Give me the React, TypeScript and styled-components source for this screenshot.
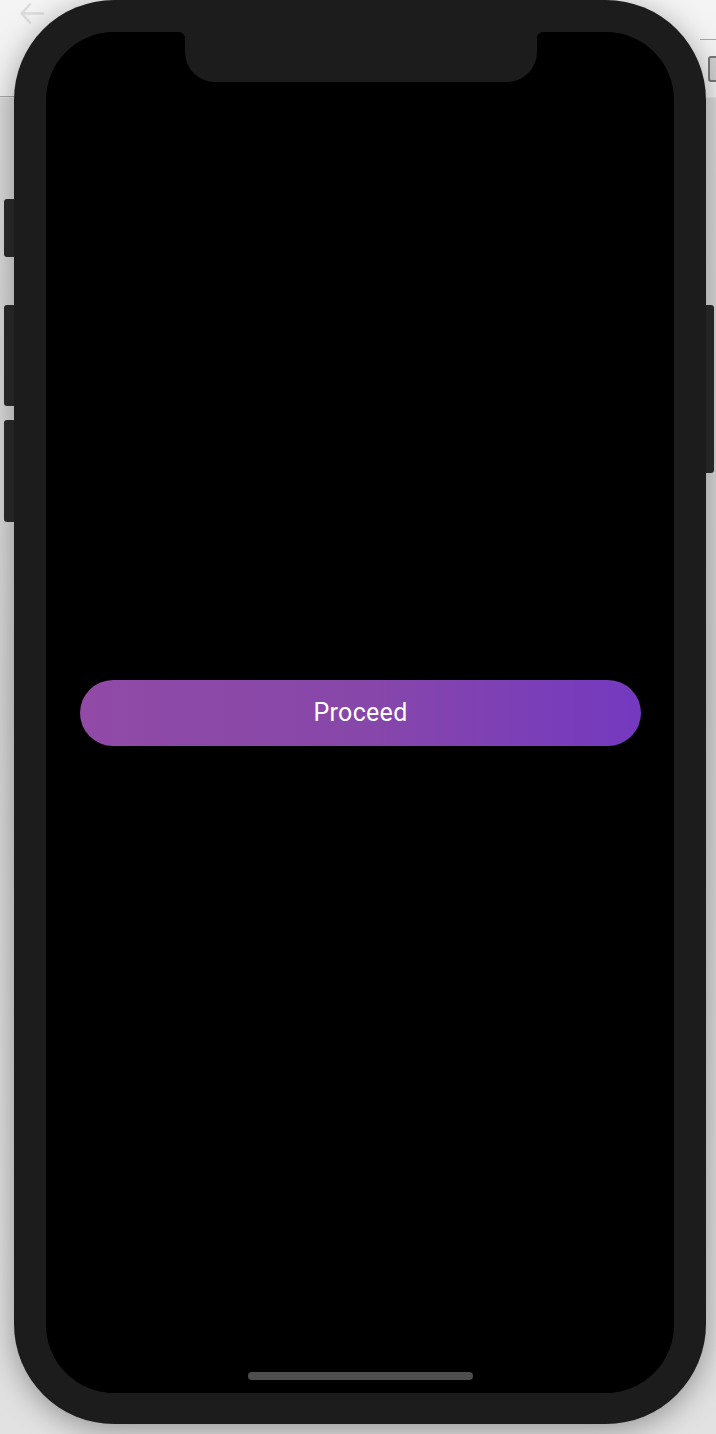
import React from "react";
import styled, { createGlobalStyle } from "styled-components";

const Global = createGlobalStyle`
  html, body { margin: 0; padding: 0; }
  body {
    width: 716px;
    height: 1434px;
    overflow: hidden;
    background: #e2e2e2;
    font-family: Roboto, "Liberation Sans", sans-serif;
  }
`;

const Page = styled.div`
  width: 716px;
  height: 1434px;
  overflow: hidden;
  display: grid;
  grid-template: 1fr / 1fr;
  background: linear-gradient(180deg, #f4f4f4 0px, #f0f0f0 97px, #dadada 98px, #d6d6d6 700px, #e2e2e2 1434px);
`;

const ChromeLayer = styled.div`
  grid-area: 1 / 1;
  display: flex;
  justify-content: space-between;
  align-items: flex-start;
`;

const LeftChrome = styled.div`
  width: 20px;
  height: 97px;
  border-bottom: 1px solid #a8a8a8;
  padding: 1px 0 0 18px;
  box-sizing: border-box;
`;

const RightChrome = styled.div`
  width: 16px;
  margin-top: 39px;
  border-top: 1px solid #a8a8a8;
  padding: 16px 0 0 8px;
  box-sizing: border-box;
`;

const TabIcon = styled.div`
  width: 14px;
  height: 22px;
  border: 2px solid #777;
  border-radius: 3px;
  background: #cfcfcf;
`;

const Stage = styled.div`
  grid-area: 1 / 1;
  position: relative;
  z-index: 0;
  display: flex;
  align-items: flex-start;
  padding-left: 4px;
`;

const KeyColumn = styled.div`
  display: flex;
  flex-direction: column;
  width: 10px;
  flex-shrink: 0;
`;

const SideKey = styled.div<{ $offset: number; $height: number; $side: "left" | "right" }>`
  width: ${(p) => (p.$side === "left" ? 12 : 11)}px;
  margin-top: ${(p) => p.$offset}px;
  height: ${(p) => p.$height}px;
  background: #2b2b2b;
  border-radius: 3px;
  flex-shrink: 0;
  position: relative;
  z-index: -1;
  ${(p) => (p.$side === "right" ? "margin-left: -3px;" : "")}
`;

const Frame = styled.div`
  width: 692px;
  height: 1424px;
  flex-shrink: 0;
  box-sizing: border-box;
  padding: 32px 32px 31px 32px;
  background: #1c1c1c;
  border-radius: 100px;
  box-shadow: 0 6px 30px rgba(0, 0, 0, 0.35);
  display: flex;
`;

const Screen = styled.div`
  flex: 1;
  background: #000;
  border-radius: 68px;
  display: grid;
  grid-template-rows: 50px 1fr 50px;
  justify-items: center;
  align-items: center;
  overflow: hidden;
`;

const Notch = styled.div`
  position: relative;
  align-self: start;
  width: 352px;
  height: 50px;
  margin-left: 1px;
  background: #1c1c1c;
  border-radius: 0 0 30px 30px;

  &::before,
  &::after {
    content: "";
    position: absolute;
    top: 0;
    width: 7px;
    height: 7px;
  }
  &::before {
    left: -7px;
    background: radial-gradient(circle at 0 100%, transparent 7px, #1c1c1c 7.5px);
  }
  &::after {
    right: -7px;
    background: radial-gradient(circle at 100% 100%, transparent 7px, #1c1c1c 7.5px);
  }
`;

const ProceedButton = styled.button`
  width: 561px;
  height: 66px;
  margin-left: 1px;
  border: none;
  border-radius: 33px;
  background: linear-gradient(90deg, #914aa6 0%, #8747a9 50%, #7439c0 100%);
  color: #ffffff;
  font-family: Roboto, "Liberation Sans", sans-serif;
  font-size: 25px;
  font-weight: 400;
  letter-spacing: 0.3px;
  cursor: pointer;
`;

const HomeIndicator = styled.div`
  align-self: end;
  margin: 0 0 13px 1px;
  width: 225px;
  height: 8px;
  border-radius: 4px;
  background: #4e4e4e;
`;

export default function App() {
  return (
    <>
      <Global />
      <Page>
        <ChromeLayer>
          <LeftChrome>
            <svg width="28" height="26" viewBox="0 0 28 26" fill="none">
              <path d="M25 12.5H4M12 3.5L3.5 12.5L12 21.5" stroke="#dcdcdc" strokeWidth="2.5" strokeLinecap="round" strokeLinejoin="round" />
            </svg>
          </LeftChrome>
          <RightChrome>
            <TabIcon />
          </RightChrome>
        </ChromeLayer>
        <Stage>
          <KeyColumn>
            <SideKey $side="left" $offset={199} $height={58} />
            <SideKey $side="left" $offset={48} $height={101} />
            <SideKey $side="left" $offset={14} $height={102} />
          </KeyColumn>
          <Frame>
            <Screen>
              <Notch />
              <ProceedButton>Proceed</ProceedButton>
              <HomeIndicator />
            </Screen>
          </Frame>
          <SideKey $side="right" $offset={305} $height={168} />
        </Stage>
      </Page>
    </>
  );
}
